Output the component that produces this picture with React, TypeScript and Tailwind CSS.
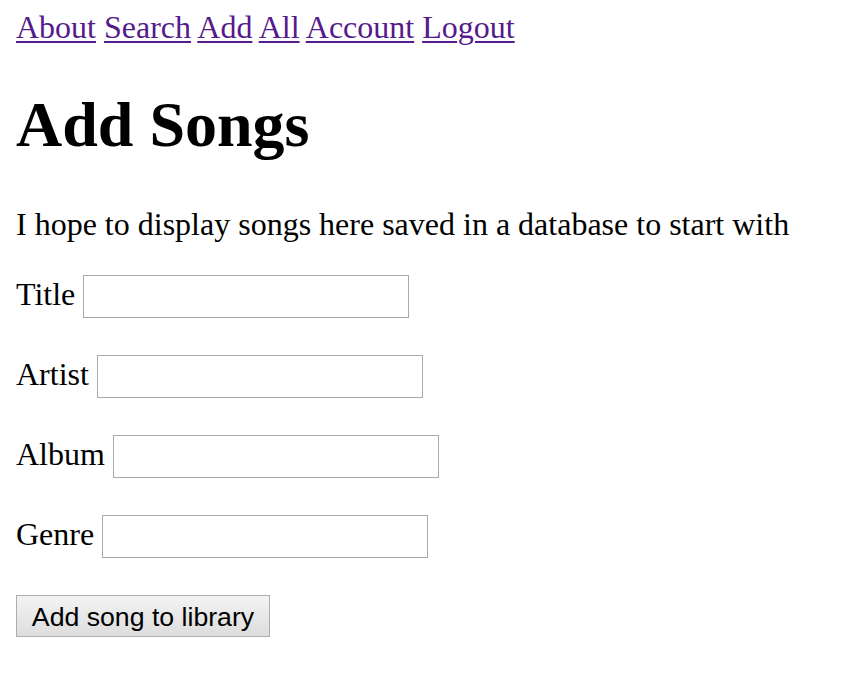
import React from "react";

const links = ["About", "Search", "Add", "All", "Account", "Logout"];
const fields = ["Title", "Artist", "Album", "Genre"];

export default function App() {
  return (
    <div className="min-h-[688px] w-full bg-white px-[16px] text-black [font-family:'Liberation_Serif','Times_New_Roman',serif]">
      <nav className="block pt-[11px] text-[32px] leading-[32px] whitespace-nowrap">
        {links.map((l, i) => (
          <React.Fragment key={l}>
            <a href="#" className="text-[#551a8b] underline decoration-[2px] underline-offset-[3px]">
              {l}
            </a>
            {i < links.length - 1 ? " " : null}
          </React.Fragment>
        ))}
      </nav>
      <h1 className="mt-[50px] text-[64px] font-bold leading-[64px]">Add Songs</h1>
      <p className="mt-[51px] text-[32px] leading-[32px]">
        I hope to display songs here saved in a database to start with
      </p>
      <div className="mt-[35px] flex flex-col gap-[37px]">
        {fields.map((f) => (
          <div key={f} className="flex h-[43px] items-start">
            <span className="mt-[3px] text-[32px] leading-[32px]">{f}</span>
            <input
              type="text"
              className="ml-[8px] h-[43px] w-[326px] border border-[#a9a9a9] bg-white outline-none"
            />
          </div>
        ))}
      </div>
      <button
        type="button"
        className="mt-[37px] h-[42px] w-[254px] border border-[#adadad] bg-gradient-to-b from-[#f3f3f3] to-[#dddddd] pb-[4px] pt-[6px] text-center text-[26.67px] leading-[30px] text-black [font-family:'Liberation_Sans',Arial,sans-serif]"
      >
        Add song to library
      </button>
    </div>
  );
}
